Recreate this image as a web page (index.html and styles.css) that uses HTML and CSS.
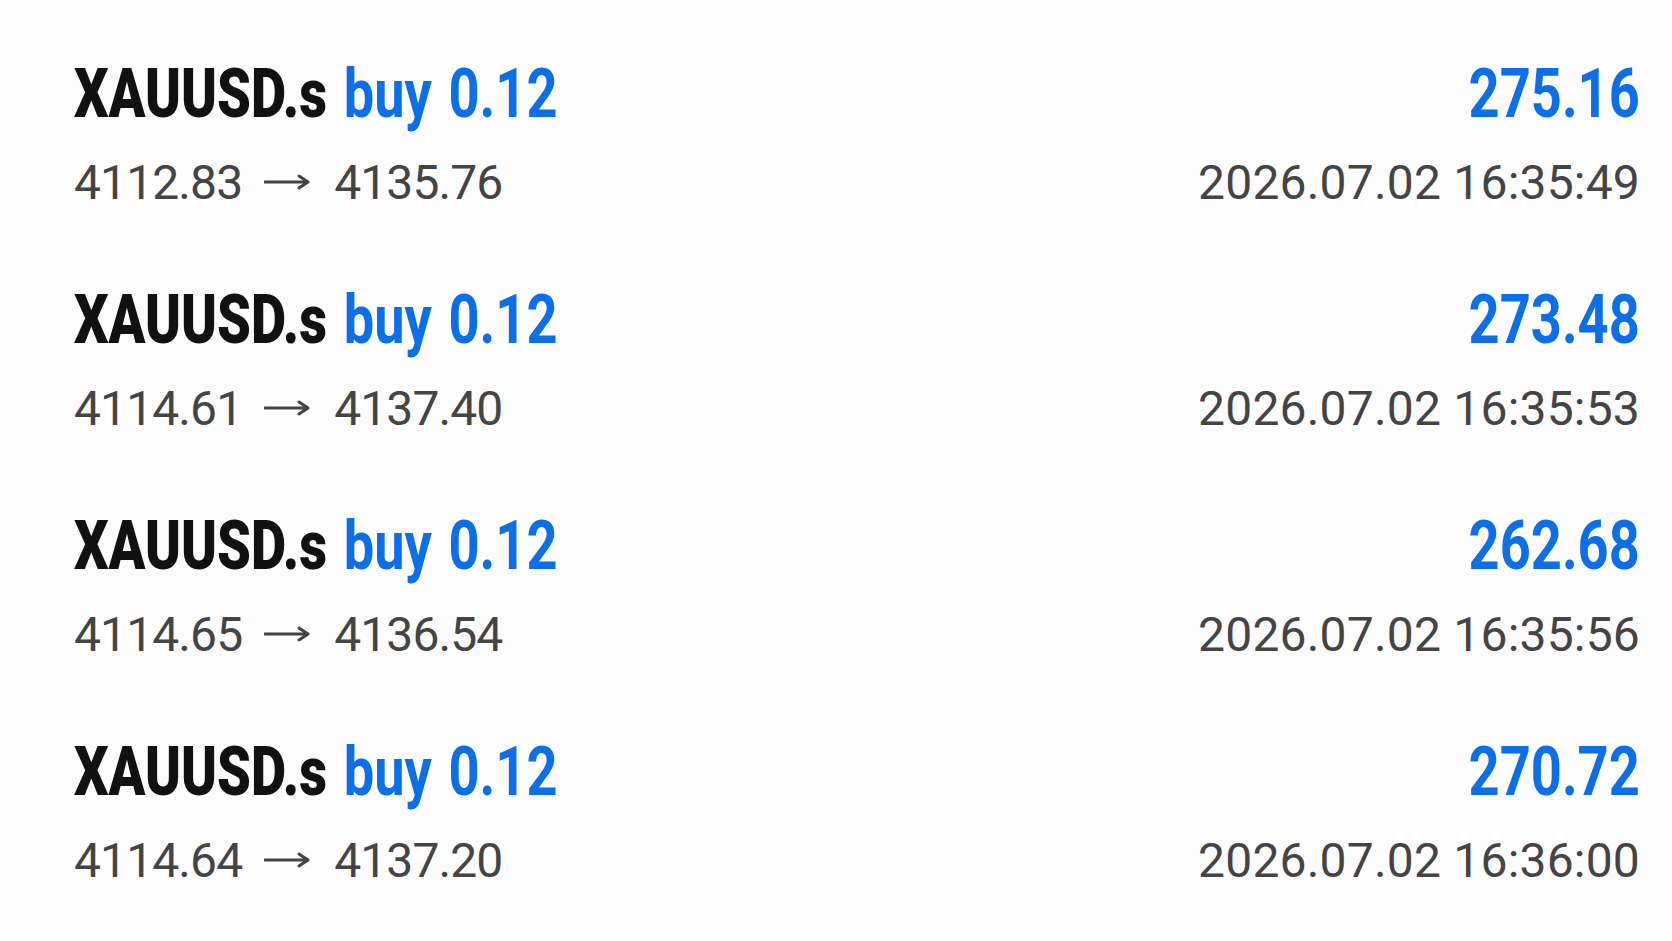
FILE: index.html
```html
<!DOCTYPE html>
<html lang="en">

<head>
    <meta charset="UTF-8">
    <meta name="viewport" content="width=device-width, initial-scale=1.0">
    <title>Closed positions</title>
    <link rel="stylesheet" href="styles.css">
</head>

<body>
    <!-- Lista de posições fechadas -->
    <ul class="deals">
        <li class="deal">
            <div class="deal-line">
                <span class="title left"><b class="symbol">XAUUSD.s</b> <span class="side">buy 0.12</span></span>
                <span class="title right profit">275.16</span>
            </div>
            <div class="deal-line sub">
                <span class="prices">4112.83<svg class="arrow" viewBox="0 0 46 16"><path d="M1 8H44M35 2L44 8L35 14"/></svg>4135.76</span>
                <span class="time">2026.07.02 16:35:49</span>
            </div>
        </li>
        <li class="deal">
            <div class="deal-line">
                <span class="title left"><b class="symbol">XAUUSD.s</b> <span class="side">buy 0.12</span></span>
                <span class="title right profit">273.48</span>
            </div>
            <div class="deal-line sub">
                <span class="prices">4114.61<svg class="arrow" viewBox="0 0 46 16"><path d="M1 8H44M35 2L44 8L35 14"/></svg>4137.40</span>
                <span class="time">2026.07.02 16:35:53</span>
            </div>
        </li>
        <li class="deal">
            <div class="deal-line">
                <span class="title left"><b class="symbol">XAUUSD.s</b> <span class="side">buy 0.12</span></span>
                <span class="title right profit">262.68</span>
            </div>
            <div class="deal-line sub">
                <span class="prices">4114.65<svg class="arrow" viewBox="0 0 46 16"><path d="M1 8H44M35 2L44 8L35 14"/></svg>4136.54</span>
                <span class="time">2026.07.02 16:35:56</span>
            </div>
        </li>
        <li class="deal">
            <div class="deal-line">
                <span class="title left"><b class="symbol">XAUUSD.s</b> <span class="side">buy 0.12</span></span>
                <span class="title right profit">270.72</span>
            </div>
            <div class="deal-line sub">
                <span class="prices">4114.64<svg class="arrow" viewBox="0 0 46 16"><path d="M1 8H44M35 2L44 8L35 14"/></svg>4137.20</span>
                <span class="time">2026.07.02 16:36:00</span>
            </div>
        </li>
    </ul>
</body>

</html>
```

FILE: styles.css
```css
body {
    margin: 0;
    font-family: Roboto, "Noto Sans", sans-serif;
    background-color: #fcfcfc;
    color: #111;
}

/* Lista de negociações */
.deals {
    list-style: none;
    margin: 0;
    padding: 54px 32px 0 74px;
    display: flex;
    flex-direction: column;
    gap: 67px;
}

.deal {
    display: flex;
    flex-direction: column;
    gap: 19px;
}

.deal-line {
    display: flex;
    justify-content: space-between;
    align-items: baseline;
}

/* Linha principal: fonte condensada */
.title {
    display: inline-block;
    font-size: 68px;
    line-height: 80px;
    font-weight: 700;
    white-space: nowrap;
    word-spacing: 4px;
    transform: scaleX(0.797);
}

.title.left {
    transform-origin: left center;
}

.title.right {
    transform-origin: right center;
}

.symbol {
    color: #111;
}

.side,
.profit {
    color: #0d6fe8;
}

/* Preços e data */
.sub {
    font-size: 48px;
    line-height: 60px;
    color: #444;
}

.prices {
    letter-spacing: -0.9px;
}

.time {
    letter-spacing: 0.2px;
}

.arrow {
    width: 46px;
    height: 16px;
    margin: 0 24px 0 22px;
    vertical-align: 9px;
}

.arrow path {
    fill: none;
    stroke: #444;
    stroke-width: 3;
    stroke-linecap: round;
    stroke-linejoin: round;
}
```
